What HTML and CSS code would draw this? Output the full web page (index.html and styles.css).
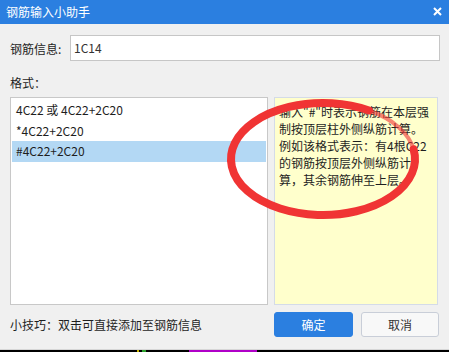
FILE: index.html
```html
<!DOCTYPE html>
<html lang="zh-CN">
<head>
<meta charset="utf-8">
<title>钢筋输入小助手</title>
<link rel="stylesheet" href="styles.css">
</head>
<body>
<div class="window">
  <div class="titlebar">
    <span class="title">钢筋输入小助手</span>
    <svg class="close" width="9" height="9" viewBox="0 0 9 9"><path d="M1 1 L8 8 M8 1 L1 8" stroke="#fff" stroke-width="2" fill="none"/></svg>
  </div>
  <div class="content">
    <div class="field-row">
      <span class="field-label">钢筋信息:</span>
      <div class="input">1C14</div>
    </div>
    <div class="section-label">格式：</div>
    <div class="panes">
      <ul class="format-list">
        <li class="item">4C22 或 4C22+2C20</li>
        <li class="item">*4C22+2C20</li>
        <li class="item selected">#4C22+2C20</li>
      </ul>
      <div class="desc">
        <span class="line">输入"#"时表示钢筋在本层强</span>
        <span class="line">制按顶层柱外侧纵筋计算。</span>
        <span class="line">例如该格式表示：有4根C22</span>
        <span class="line">的钢筋按顶层外侧纵筋计</span>
        <span class="line">算，其余钢筋伸至上层。</span>
      </div>
    </div>
    <div class="footer">
      <span class="tip">小技巧：双击可直接添加至钢筋信息</span>
      <div class="buttons">
        <button class="btn primary">确定</button>
        <button class="btn">取消</button>
      </div>
    </div>
  </div>
</div>
<div class="taskbar">
  <span class="tb tb-yellow"></span>
  <span class="tb tb-green"></span>
  <span class="tb tb-magenta"></span>
</div>
<svg class="annotation" width="449" height="352" viewBox="0 0 449 352">
  <path d="M413.6 149.3 A92 56 0 1 1 369 110.5" fill="none" stroke="#f03434" stroke-width="8" stroke-linecap="round"/>
  <path d="M369 110.5 A92 56 0 0 1 413.6 149.3" fill="none" stroke="#f03434" stroke-width="4" stroke-opacity="0.6"/>
</svg>
</body>
</html>
```

FILE: styles.css
```css
* { box-sizing: border-box; }
html, body { margin: 0; padding: 0; }
body {
  width: 449px;
  height: 352px;
  overflow: hidden;
  background: #f0f0f0;
  font-family: "Noto Sans CJK SC", "Noto Sans", sans-serif;
  font-size: 12px;
  color: #1e1e1e;
  position: relative;
}
.window {
  height: 350px;
  border-bottom: 1px solid #d6d6d6;
  background: #f0f0f0;
}
.titlebar {
  height: 24px;
  background: #2b7fe0;
  display: flex;
  align-items: center;
  justify-content: space-between;
  padding: 0 7px 0 6px;
}
.title {
  color: #fff;
  font-size: 12px;
  line-height: 24px;
}
.close { display: block; margin-top: -1px; }
.content {
  padding: 0 9px 0 10px;
}
.field-row {
  margin-top: 11px;
  display: flex;
  align-items: center;
  height: 26px;
}
.field-label {
  width: 60px;
  flex: none;
}
.input {
  flex: 1;
  height: 26px;
  background: #fff;
  border: 1px solid #c6c6c6;
  padding-left: 3px;
  line-height: 24px;
  color: #333;
}
.section-label {
  margin-top: 14px;
  line-height: 16px;
}
.panes {
  margin-top: 6px;
  height: 208px;
  display: flex;
  gap: 6px;
  margin-right: 2px;
}
.format-list {
  list-style: none;
  margin: 0;
  padding: 2px 1px 0;
  width: 258px;
  flex: none;
  background: #fff;
  border: 1px solid #c8c8c8;
}
.item {
  height: 20.5px;
  line-height: 20px;
  padding-left: 4px;
}
.item.selected {
  background: #b3d8f4;
}
.desc {
  flex: 1;
  background: #ffffcc;
  border: 1px solid #d4dbe8;
  padding: 5px 2px 0 4px;
  line-height: 17px;
}
.line {
  display: block;
  white-space: nowrap;
}
.footer {
  margin-top: 7px;
  height: 25px;
  display: flex;
  align-items: center;
  justify-content: space-between;
  margin-right: 1px;
}
.tip { line-height: 25px; }
.buttons {
  display: flex;
  gap: 8px;
}
.btn {
  width: 78px;
  height: 25px;
  border: 1px solid #c9ced8;
  border-radius: 3px;
  background: #f8f8f8;
  font-family: inherit;
  font-size: 12px;
  color: #333;
  padding: 0;
}
.btn.primary {
  width: 79px;
  background: #2b7fe0;
  border-color: #2b7fe0;
  color: #fff;
}
.taskbar {
  height: 2px;
  background: #000;
  display: flex;
  align-items: stretch;
}
.tb { display: block; height: 2px; }
.tb-yellow { width: 2px; margin-left: 137px; background: #c8b400; }
.tb-green { width: 4px; margin-left: 3px; background: #2aa02a; }
.tb-magenta { width: 68px; margin-left: 43px; background: #b000c8; }
.annotation {
  position: absolute;
  left: 0;
  top: 0;
  pointer-events: none;
}
```
